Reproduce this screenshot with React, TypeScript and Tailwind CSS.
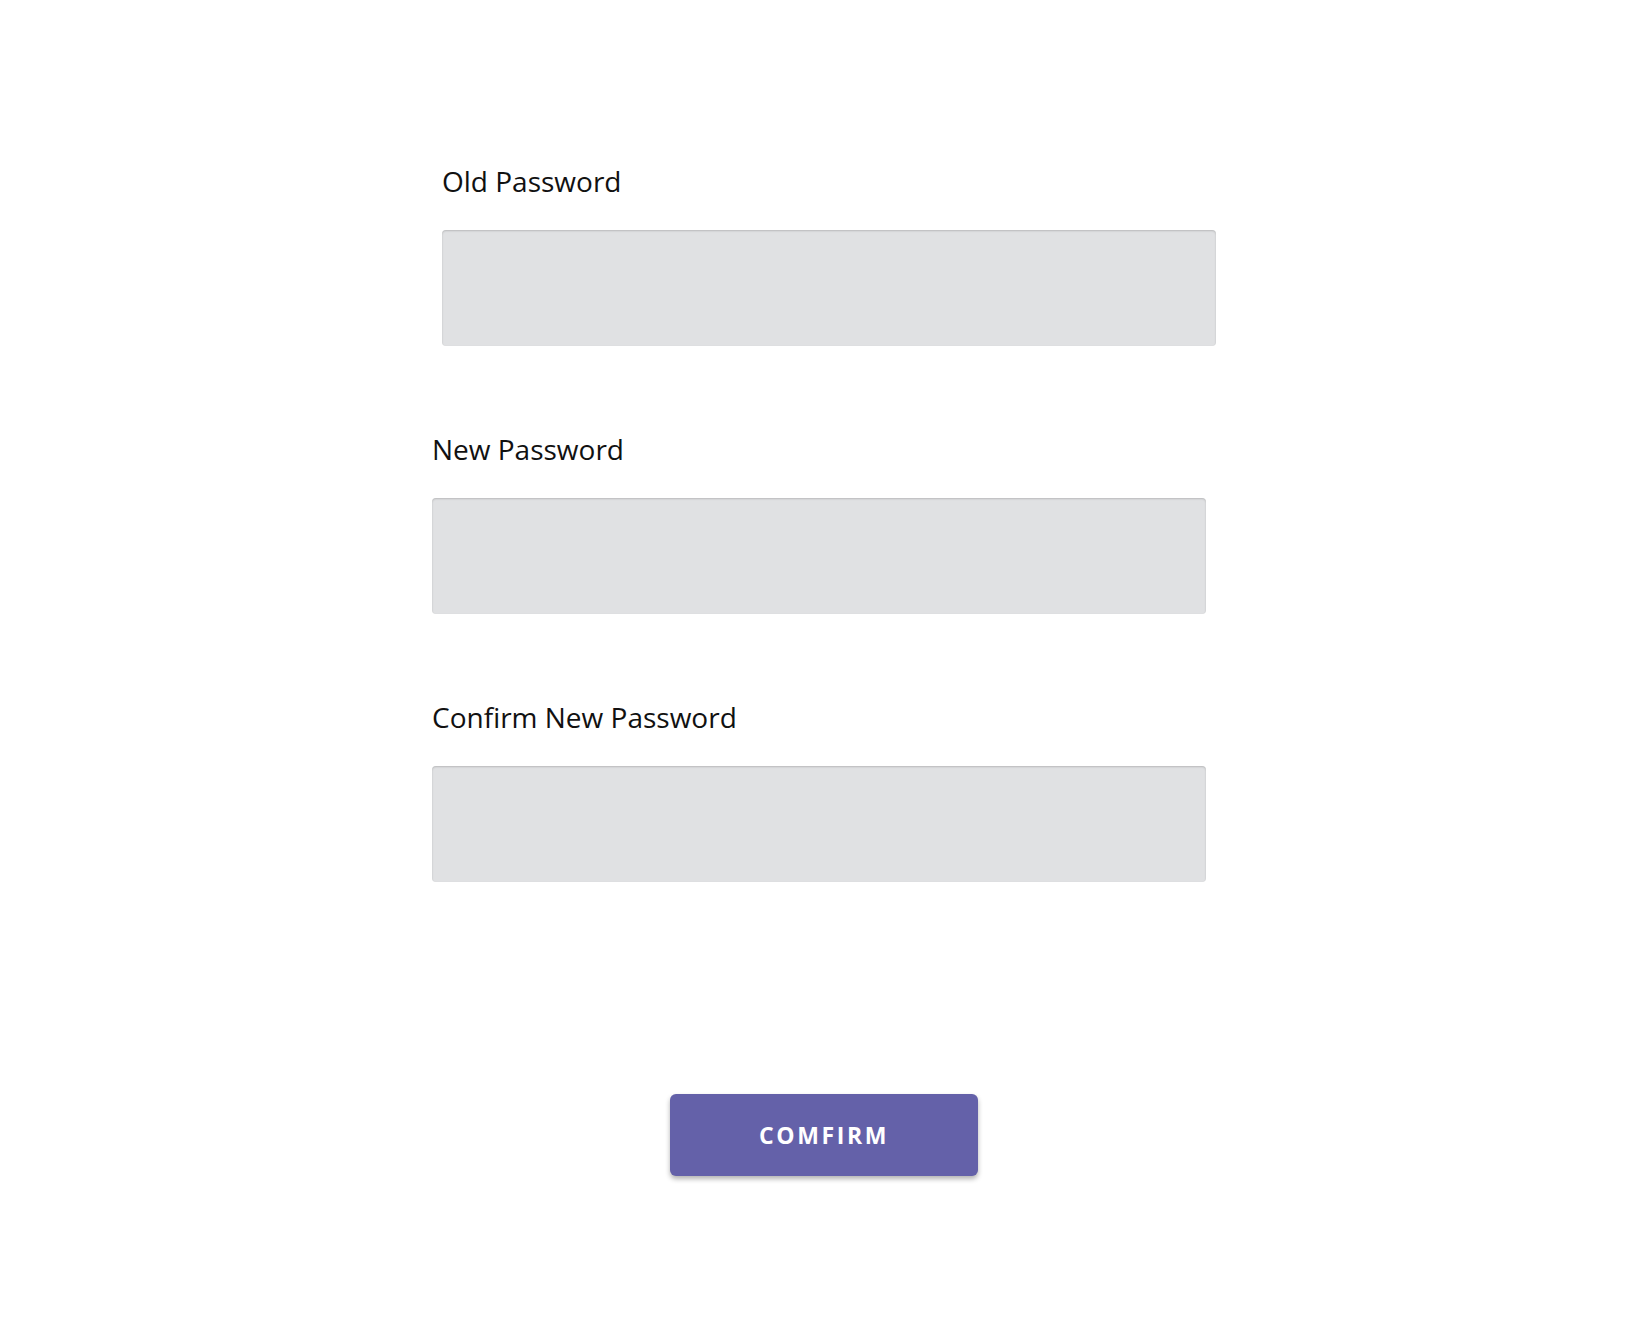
import React from "react";

function Field({ label, className }: { label: string; className: string }) {
  return (
    <div className={"flex flex-col " + className}>
      <label className="text-[28px] leading-[38px] text-[#111111]">{label}</label>
      <input
        type="password"
        className="mt-[30px] h-[116px] w-full rounded-[4px] bg-[#e0e1e3] shadow-[inset_0_1px_2px_rgba(0,0,0,0.18)] outline-none"
      />
    </div>
  );
}

export default function App() {
  return (
    <div
      className="min-h-[1336px] w-full bg-white"
      style={{ fontFamily: '"Open Sans", "Noto Sans", sans-serif' }}
    >
      <div className="mx-auto flex w-[784px] flex-col pt-[162px]">
        <Field label="Old Password" className="pl-[10px]" />
        <Field label="New Password" className="mt-[84px] pr-[10px]" />
        <Field label="Confirm New Password" className="mt-[84px] pr-[10px]" />
      </div>
      <div className="mt-[212px] flex justify-center">
        <button className="h-[82px] w-[308px] rounded-[6px] bg-[#6461a9] text-[23px] font-bold tracking-[2.6px] text-white shadow-[0_3px_5px_rgba(0,0,0,0.3)]">
          COMFIRM
        </button>
      </div>
    </div>
  );
}
